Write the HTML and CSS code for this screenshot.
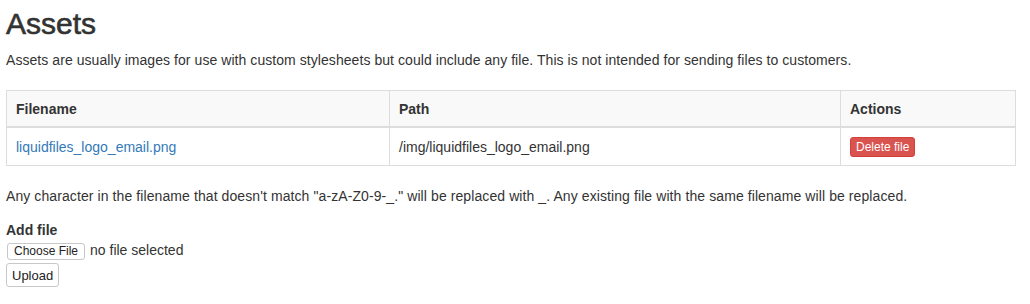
FILE: index.html
```html
<!DOCTYPE html>
<html>
<head>
<meta charset="utf-8">
<link rel="stylesheet" href="styles.css">
</head>
<body>
<div class="page">
  <h1 class="title">Assets</h1>
  <p class="lead">Assets are usually images for use with custom stylesheets but could include any file. This is not intended for sending files to customers.</p>
  <table class="assets">
    <colgroup>
      <col class="c-name">
      <col class="c-path">
      <col class="c-actions">
    </colgroup>
    <thead>
      <tr><th>Filename</th><th>Path</th><th>Actions</th></tr>
    </thead>
    <tbody>
      <tr>
        <td><a class="file-link" href="#">liquidfiles_logo_email.png</a></td>
        <td>/img/liquidfiles_logo_email.png</td>
        <td><button class="btn-danger" type="button">Delete file</button></td>
      </tr>
    </tbody>
  </table>
  <p class="note">Any character in the filename that doesn't match "a-zA-Z0-9-_." will be replaced with _. Any existing file with the same filename will be replaced.</p>
  <form class="upload-form">
    <label class="field-label">Add file</label>
    <div class="file-row">
      <span class="file-btn">Choose File</span>
      <span class="file-status">no file selected</span>
    </div>
    <div class="submit-row">
      <button class="upload-btn" type="button">Upload</button>
    </div>
  </form>
</div>
</body>
</html>
```

FILE: styles.css
```css
* { box-sizing: border-box; }
html, body { margin: 0; padding: 0; background: #fff; }
body {
  font-family: "Liberation Sans", Arial, sans-serif;
  font-size: 14px;
  line-height: 20px;
  color: #333;
}
.page { padding: 0 14px 0 6px; }
.title {
  font-size: 30px;
  font-weight: normal;
  -webkit-text-stroke: 0.6px #333;
  line-height: 33px;
  margin: 7px 0 10px;
  color: #333;
}
.lead { margin: 0 0 20px; letter-spacing: 0.06px; }
.assets {
  width: 100%;
  border-collapse: collapse;
  border: 1px solid #ddd;
  margin-bottom: 20px;
}
.c-name { width: 383px; }
.c-path { width: 451px; }
.c-actions { width: auto; }
.assets th, .assets td {
  border: 1px solid #ddd;
  padding: 8px 8px 8px 9px;
  text-align: left;
  vertical-align: middle;
  line-height: 20px;
}
.assets thead th {
  background: #f9f9f9;
  font-weight: bold;
  border-bottom-width: 2px;
  padding-top: 8px;
  padding-bottom: 7px;
}
.file-link { color: #337ab7; text-decoration: none; }
.btn-danger {
  font-family: inherit;
  font-size: 12px;
  line-height: 18px;
  padding: 0 5px;
  color: #fff;
  background: #d9534f;
  border: 1px solid #d43f3a;
  border-radius: 3px;
  display: inline-block;
  vertical-align: middle;
}
.note { margin: 4px 0 14px; letter-spacing: 0.09px; }
.upload-form { margin: 0; }
.field-label {
  display: block;
  font-weight: bold;
  margin-bottom: 0;
}
.file-row {
  display: flex;
  align-items: center;
  gap: 5px;
  height: 18px;
  margin-top: 1px;
}
.file-btn {
  font-size: 12px;
  line-height: 13px;
  padding: 1px 6px;
  border: 1px solid #c8c8c8;
  border-radius: 3px;
  background: #fff;
  color: #222;
  margin-left: 1px;
  margin-top: 3px;
}
.file-status { font-size: 14px; }
.submit-row { margin-top: 4px; }
.upload-btn {
  font-family: inherit;
  font-size: 13px;
  line-height: 16px;
  padding: 3px 5px 2px;
  border: 1px solid #c8c8c8;
  border-radius: 3px;
  background: #fff;
  color: #222;
  height: 24px;
}
```
